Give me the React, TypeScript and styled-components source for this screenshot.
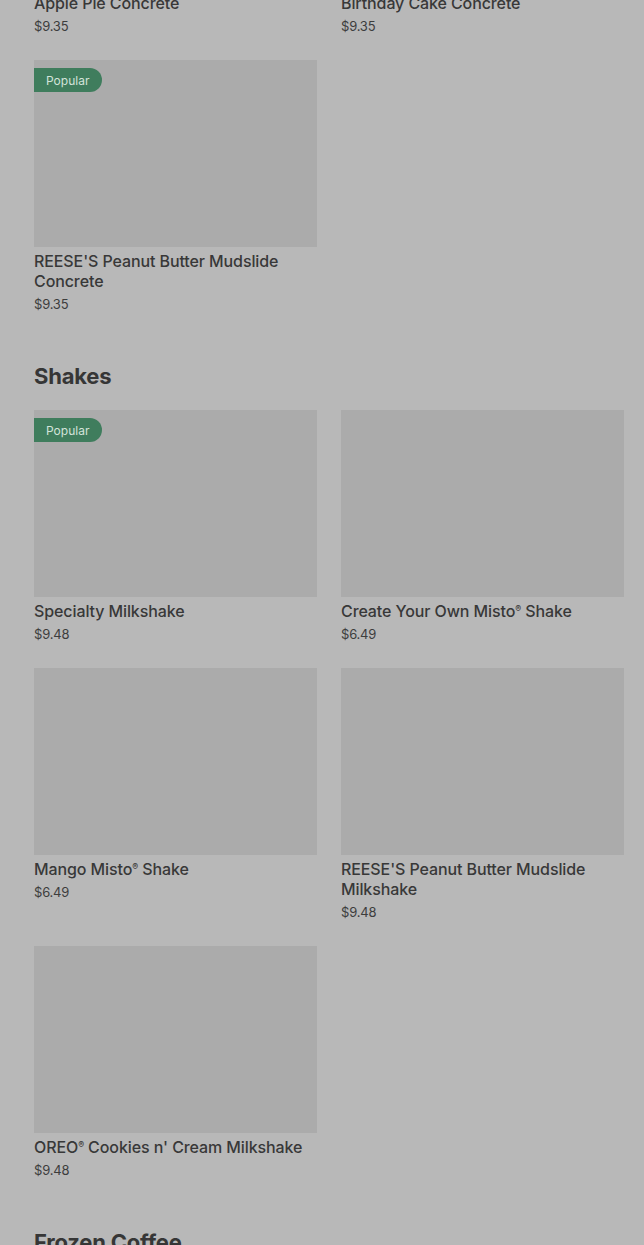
import React from "react";
import styled, { createGlobalStyle } from "styled-components";

type Item = { name: string; price: string; popular?: boolean };

const concretes: Item[] = [
  { name: "Apple Pie Concrete", price: "$9.35" },
  { name: "Birthday Cake Concrete", price: "$9.35" },
  { name: "REESE'S Peanut Butter Mudslide Concrete", price: "$9.35", popular: true },
];

const shakes: Item[] = [
  { name: "Specialty Milkshake", price: "$9.48", popular: true },
  { name: "Create Your Own Misto® Shake", price: "$6.49" },
  { name: "Mango Misto® Shake", price: "$6.49" },
  { name: "REESE'S Peanut Butter Mudslide Milkshake", price: "$9.48" },
  { name: "OREO® Cookies n' Cream Milkshake", price: "$9.48" },
];

const GlobalStyle = createGlobalStyle`
  html, body {
    margin: 0;
    padding: 0;
    background: #b8b8b8;
    overflow: hidden;
  }
  body {
    font-family: Inter, "Noto Sans", "Liberation Sans", sans-serif;
    color: #383838;
  }
`;

// the list is scrolled: the first row's picture sits above the frame
const Page = styled.main`
  padding: 0 20px 0 34px;
  margin-top: -198px;
`;

const Section = styled.section`
  display: flex;
  flex-direction: column;
  padding-bottom: 48px;
`;

const SectionTitle = styled.h2`
  margin: 0 0 20px;
  font-size: 22px;
  line-height: 28px;
  font-weight: 700;
  color: #363636;
  letter-spacing: -0.2px;
`;

const Grid = styled.div`
  display: grid;
  grid-template-columns: 1fr 1fr;
  column-gap: 24px;
  row-gap: 24px;
  align-items: start;
`;

const Card = styled.article`
  display: flex;
  flex-direction: column;
`;

const Thumb = styled.div`
  position: relative;
  height: 187px;
  background: #ababab;
  margin-bottom: 4px;
`;

const Badge = styled.span`
  position: absolute;
  top: 8px;
  left: 0;
  height: 24px;
  padding: 0 13px 0 12px;
  display: flex;
  align-items: center;
  background: #3f7d5d;
  color: #d3e3da;
  font-size: 12px;
  border-radius: 0 12px 12px 0;
`;

const Name = styled.h3`
  margin: 0;
  font-size: 16px;
  line-height: 20px;
  font-weight: 500;
  color: #383838;
  letter-spacing: -0.1px;
`;

const Price = styled.span`
  font-size: 13px;
  line-height: 20px;
  margin-top: 3px;
  color: #3d3d3d;
  letter-spacing: -0.2px;
`;

const Sup = styled.span`
  font-size: 0.55em;
  line-height: 0;
  vertical-align: 0.6em;
`;

const renderName = (name: string) =>
  name.split("®").flatMap((part, i, arr) =>
    i < arr.length - 1 ? [part, <Sup key={i}>®</Sup>] : [part]
  );

const MenuCard: React.FC<{ item: Item }> = ({ item }) => (
  <Card>
    <Thumb>{item.popular && <Badge>Popular</Badge>}</Thumb>
    <Name>{renderName(item.name)}</Name>
    <Price>{item.price}</Price>
  </Card>
);

export default function App() {
  return (
    <>
      <GlobalStyle />
      <Page>
        <Section>
          <Grid>
            {concretes.map((item) => (
              <MenuCard key={item.name} item={item} />
            ))}
          </Grid>
        </Section>
        <Section>
          <SectionTitle>Shakes</SectionTitle>
          <Grid>
            {shakes.map((item) => (
              <MenuCard key={item.name} item={item} />
            ))}
          </Grid>
        </Section>
        <Section>
          <SectionTitle>Frozen Coffee</SectionTitle>
        </Section>
      </Page>
    </>
  );
}
